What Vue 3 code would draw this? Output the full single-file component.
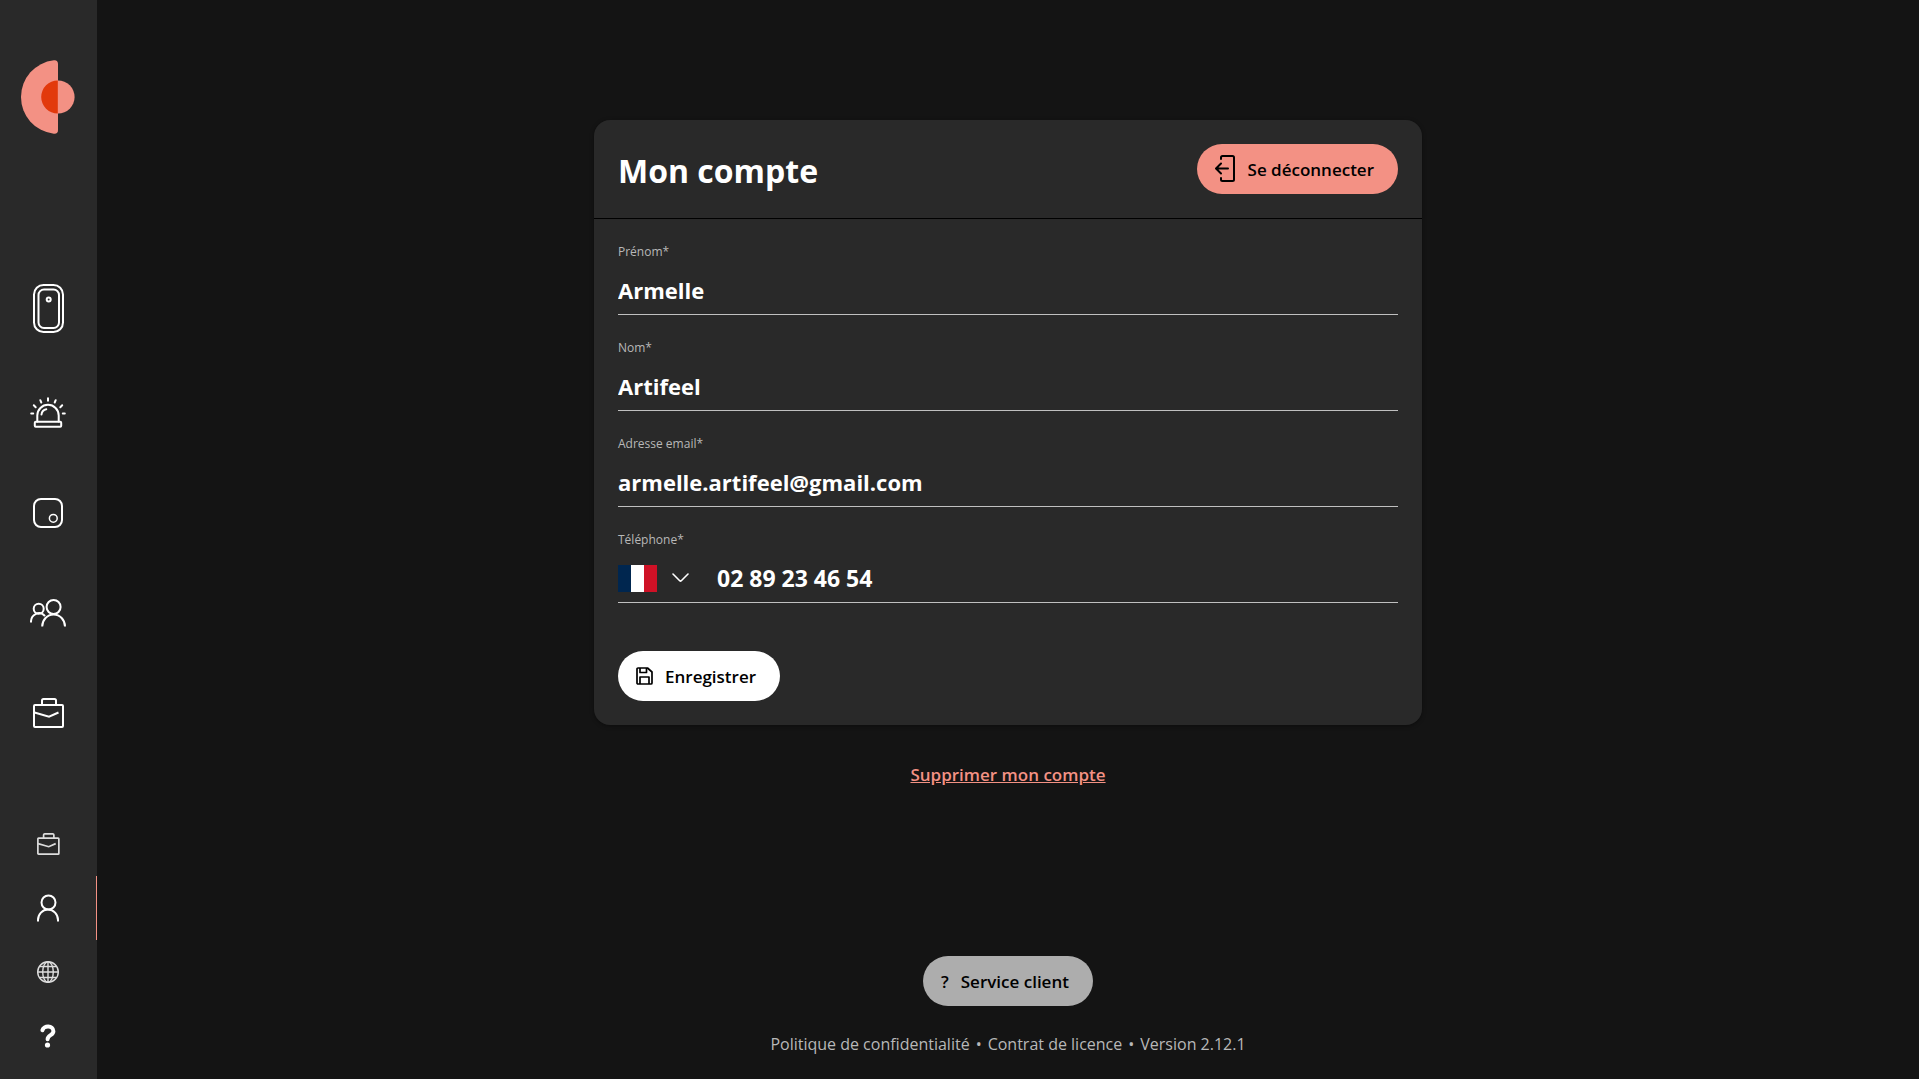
<script setup>
import { ref } from 'vue'

const textFields = ref([
  { id: 'prenom', label: 'Prénom*', type: 'text', value: 'Armelle' },
  { id: 'nom', label: 'Nom*', type: 'text', value: 'Artifeel' },
  { id: 'email', label: 'Adresse email*', type: 'email', value: 'armelle.artifeel@gmail.com' },
])
const country = ref('FR')
const phone = ref('02 89 23 46 54')
</script>

<template>
  <div class="layout">
    <aside class="sidebar">
      <a class="logo" href="#" aria-label="Accueil">
        <svg width="54" height="74" viewBox="0 0 54 74">
          <path d="M32.800 .24Q37 -.2 37 4V70Q37 74.200 32.800 73.760A37 37 0 0 1 32.800 .24Z" fill="#f39184" />
          <circle cx="37" cy="37" r="16.600" fill="#f39184" />
          <path d="M36.800 20.400A16.600 16.600 0 0 0 36.800 53.600Z" fill="#e2390c" />
        </svg>
      </a>

      <nav class="primary" aria-label="Navigation principale">
        <a class="device" href="#" aria-label="Appareil">
          <svg width="32" height="49" viewBox="-1 0 32 49" stroke-width="2">
            <rect x="1" y="1" width="29" height="47" rx="9.500" />
            <rect x="5.500" y="5.500" width="20.500" height="38.500" rx="5.500" />
            <circle cx="15.700" cy="15.500" r="2" />
          </svg>
        </a>
        <a href="#" aria-label="Alarme">
          <svg width="36" height="32" viewBox="0 0 36 32" stroke-width="2" stroke-linecap="round">
            <path d="M7.300 24.500V18.500a10.700 10.700 0 0 1 21.400 0V24.500" />
            <rect x="4.800" y="24.800" width="26.400" height="5" rx="1" />
            <path d="M11.500 17.500q.5-4.500 4.800-5.300" />
            <path d="M18 1.200V3.800M10.300 3.200l1 2.300M25.700 3.200l-1 2.300M3.800 8.300l1.900 1.900M32.200 8.300l-1.900 1.900M1.200 16.500H3.200M32.800 16.500H34.800" />
          </svg>
        </a>
        <a href="#" aria-label="Capteur">
          <svg width="30" height="30" viewBox="0 0 30 30">
            <rect x="1" y="1" width="28" height="28" rx="7" stroke-width="2" />
            <circle cx="20.300" cy="20.300" r="3.900" stroke-width="1.500" />
          </svg>
        </a>
        <a href="#" aria-label="Utilisateurs">
          <svg width="36" height="28" viewBox="0 0 36 28" stroke-width="2">
            <circle cx="23.600" cy="8" r="7" />
            <path d="M12.200 27.500a11.400 12 0 0 1 22.800 0" />
            <circle cx="8.700" cy="9.700" r="5" />
            <path d="M1 23.500a8 8.800 0 0 1 14-6.300" />
          </svg>
        </a>
        <a href="#" aria-label="Maintenance">
          <svg width="32" height="30" viewBox="-1 0 32 30" stroke-width="2">
            <rect x="1" y="7" width="29" height="22" rx="1" />
            <path d="M9 7V2.500a1.500 1.500 0 0 1 1.500-1.500h11a1.500 1.500 0 0 1 1.500 1.500V7" />
            <path d="M1.500 14.500l14.500 4.200L25.500 14.500" />
          </svg>
        </a>
      </nav>

      <nav class="secondary" aria-label="Navigation secondaire">
        <a href="#" aria-label="Dossier">
          <svg class="soft" width="24" height="22" viewBox="-1 0 32 30" stroke-width="2.300">
            <rect x="1.200" y="7" width="28.600" height="21.800" rx="1" />
            <path d="M9 7V2.500a1.500 1.500 0 0 1 1.500-1.300h11a1.500 1.500 0 0 1 1.500 1.300V7" />
            <path d="M1.500 14.500l14.500 4.200L25.500 14.500" />
          </svg>
        </a>
        <a class="active" href="#" aria-label="Mon compte" aria-current="page">
          <svg width="22" height="28" viewBox="0 0 22 28" stroke-width="2">
            <circle cx="11.500" cy="8.500" r="7" />
            <path d="M1 27.500V26a10 10.500 0 0 1 20 0v1.500" />
          </svg>
        </a>
        <a href="#" aria-label="Langue">
          <svg class="soft" width="22" height="22" viewBox="0 0 22 22" stroke-width="1.400">
            <circle cx="11" cy="11" r="10.300" />
            <ellipse cx="11" cy="11" rx="5.300" ry="10.300" />
            <path d="M11 .7V21.300M.7 11H21.300M2.400 5.500H19.600M2.400 16.500H19.600" />
          </svg>
        </a>
        <a href="#" aria-label="Aide">
          <svg width="16" height="24" viewBox="0 0 16 24">
            <path d="M2.400 6.200C3.500 1.300 13.400 1 13.400 7.200C13.400 11.500 7.700 10.800 7.600 15.200" stroke-width="4" stroke-linecap="round" />
            <circle cx="7.500" cy="21" r="2.600" fill="#fff" stroke="none" />
          </svg>
        </a>
      </nav>
    </aside>

    <main class="content">
      <form class="card" @submit.prevent>
        <header class="card-header">
          <h1>Mon compte</h1>
          <button class="btn pink" type="button">
            <svg width="21" height="28" viewBox="0 0 21 28" stroke-width="2" stroke-linecap="round" stroke-linejoin="round">
              <path d="M6 4V2.500a1.500 1.500 0 0 1 1.500-1.500H17.500A1.500 1.500 0 0 1 19 2.500V24.500a1.500 1.500 0 0 1-1.500 1.500H7.500A1.500 1.500 0 0 1 6 24.500V23" />
              <path d="M13 13.500H1.500M6 8.500l-5 5 5 5" />
            </svg>
            Se déconnecter
          </button>
        </header>

        <div class="card-body">
          <div v-for="field in textFields" :key="field.id" class="field">
            <label :for="field.id">{{ field.label }}</label>
            <input :id="field.id" v-model="field.value" :type="field.type" required />
          </div>

          <div class="field">
            <label for="telephone">Téléphone*</label>
            <div class="phone">
              <div class="country">
                <select v-model="country" aria-label="Pays">
                  <option value="FR">France</option>
                </select>
                <svg width="17" height="10" viewBox="0 0 17 10" stroke-width="1.600" stroke-linecap="round" stroke-linejoin="round">
                  <path d="M1 1l6.700 6.700q.8.700 1.600 0L16 1" />
                </svg>
              </div>
              <input id="telephone" v-model="phone" type="tel" required />
            </div>
          </div>

          <button class="btn white" type="submit">
            <svg width="17" height="18" viewBox="0 0 17 18" stroke-width="1.700" stroke-linejoin="round">
              <path d="M1 2a1 1 0 0 1 1-1H11.500L16 5V16a1 1 0 0 1-1 1H2a1 1 0 0 1-1-1Z" />
              <path d="M4 1V5.500H10.500V1M4 17V10H13V17" />
            </svg>
            Enregistrer
          </button>
        </div>
      </form>

      <a class="delete" href="#">Supprimer mon compte</a>

      <footer class="footer">
        <button class="btn grey" type="button"><span>?</span>Service client</button>
        <p class="legal">
          <a href="#">Politique de confidentialité</a>
          <span>•</span>
          <a href="#">Contrat de licence</a>
          <span>•</span>
          <span>Version 2.12.1</span>
        </p>
      </footer>
    </main>
  </div>
</template>

<style>
body {
  margin: 0;
  background: #141414;
}
</style>

<style scoped>
.layout {
  display: flex;
  min-height: 100vh;
  background: #141414;
  color: #fff;
  font-family: 'Open Sans', sans-serif;
  font-size: 16px;
}

.layout *,
.layout {
  box-sizing: border-box;
}

svg {
  display: block;
  flex: none;
  fill: none;
  stroke: currentColor;
}

a {
  color: inherit;
  text-decoration: none;
}

.sidebar {
  flex: none;
  display: flex;
  flex-direction: column;
  align-items: center;
  width: 97px;
  padding: 60px 1px 11px 0;
  background: #292929;
}

.logo svg {
  stroke: none;
}

.primary {
  display: flex;
  flex-direction: column;
  gap: 60px;
  margin: 150px 0 60px;
}

.primary a {
  display: flex;
  align-items: center;
  justify-content: center;
  height: 40px;
}

.primary .device {
  height: 49px;
}

.secondary {
  align-self: stretch;
  margin-top: auto;
  margin-right: -1px;
}

.secondary a {
  display: flex;
  align-items: center;
  justify-content: center;
  height: 64px;
  border-right: 1px solid transparent;
}

.secondary .active {
  border-right-color: #f39184;
}

.soft {
  color: #ddd;
}

.content {
  flex: 1;
  display: flex;
  flex-direction: column;
  align-items: center;
  padding: 120px 24px 23px;
}

.card {
  width: 100%;
  max-width: 828px;
  border-radius: 16px;
  background: #292929;
  box-shadow: 0 1px 4px rgba(0, 0, 0, 0.4);
}

.card-header {
  display: flex;
  align-items: center;
  justify-content: space-between;
  padding: 24px;
  border-bottom: 1px solid #000;
}

h1 {
  margin: 0;
  padding-top: 4px;
  font-size: 32px;
  line-height: 40px;
  font-weight: 700;
}

.card-body {
  padding: 0 24px 24px;
}

.field {
  display: flex;
  flex-direction: column;
  gap: 10px;
  padding: 25px 0 4px;
  border-bottom: 1px solid #c0c0c0;
}

label {
  color: #b8b8b8;
  font-size: 12px;
  line-height: 16px;
}

input {
  width: 100%;
  height: 40px;
  padding: 0;
  border: 0;
  outline: 0;
  background: none;
  color: #fff;
  font-family: inherit;
  font-size: 22px;
  font-weight: 700;
}

.phone {
  display: flex;
  align-items: center;
  gap: 28px;
}

.phone input {
  font-size: 23px;
}

.country {
  position: relative;
  flex: none;
  display: flex;
  align-items: center;
  justify-content: flex-end;
  width: 71px;
  height: 27px;
}

.country select {
  position: absolute;
  inset: 0;
  appearance: none;
  border: 0;
  color: transparent;
  background: linear-gradient(90deg, #00264f 13px, #fff 13px 26px, #cf1126 26px) left / 39px 27px no-repeat;
}

.country svg {
  position: relative;
  pointer-events: none;
}

.btn {
  display: flex;
  align-items: center;
  gap: 12px;
  height: 50px;
  padding: 0 24px 0 18px;
  border: 0;
  border-radius: 25px;
  color: #000;
  font-family: inherit;
  font-size: 17px;
  font-weight: 600;
  white-space: nowrap;
}

.pink {
  background: #f39184;
}

.white {
  margin-top: 48px;
  background: #fff;
}

.grey {
  background: #adadad;
}

.delete {
  margin: 38px 0;
  color: #f39184;
  font-size: 17px;
  line-height: 24px;
  font-weight: 600;
  text-decoration: underline;
}

.footer {
  display: flex;
  flex-direction: column;
  align-items: center;
  gap: 26px;
  margin-top: auto;
}

.legal {
  display: flex;
  gap: 6px;
  margin: 0;
  color: #b8b8b8;
  font-size: 16px;
  line-height: 24px;
}
</style>
